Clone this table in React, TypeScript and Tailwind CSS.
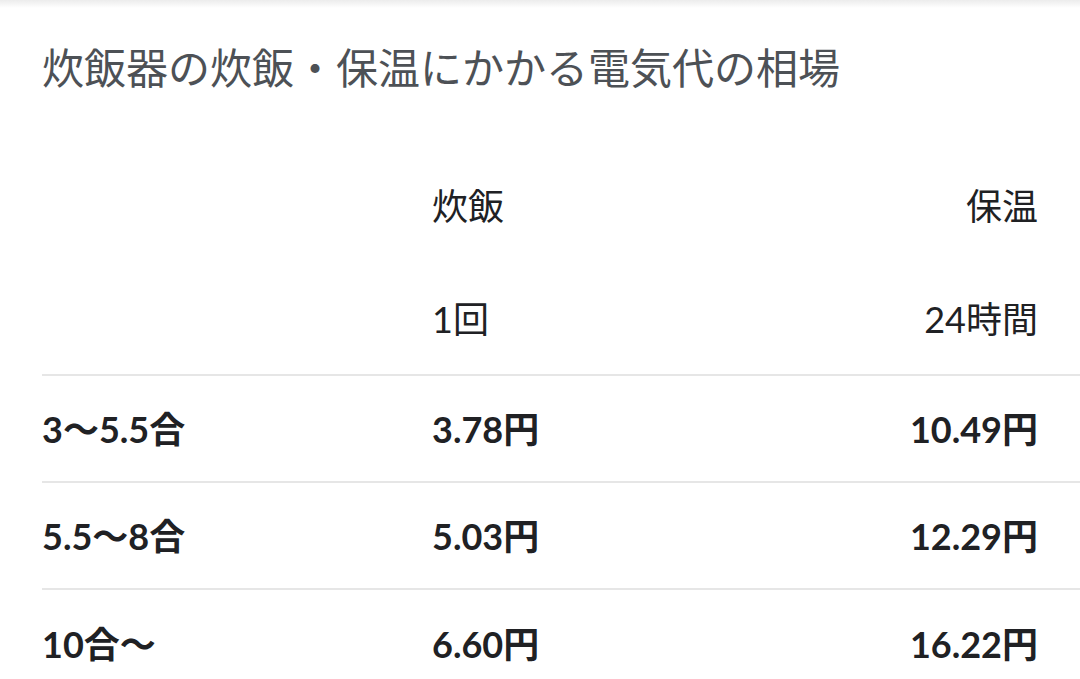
import React from "react";

const rows = [
  ["3〜5.5合", "3.78円", "10.49円"],
  ["5.5〜8合", "5.03円", "12.29円"],
  ["10合〜", "6.60円", "16.22円"],
];

export default function App() {
  return (
    <div
      className="w-[1080px] h-[679px] overflow-hidden bg-white relative"
      style={{ fontFamily: 'Lato, "Noto Sans CJK JP", sans-serif' }}
    >
      <div className="absolute top-0 left-0 right-0 h-[8px] bg-gradient-to-b from-[#ececec] to-white" />
      <div className="pl-[42px] pt-[44px] h-[148px]">
        <h1 className="text-[42px] leading-[48px] text-[#4d5156] font-normal whitespace-nowrap">
          炊飯器の炊飯・保温にかかる電気代の相場
        </h1>
      </div>
      <div className="pl-[42px]">
        <div className="flex h-[116px] items-center text-[36px] text-[#202124] pr-[42px]">
          <div className="w-[390px]" />
          <div className="flex-1">炊飯</div>
          <div className="text-right">保温</div>
        </div>
        <div className="flex h-[112px] items-center text-[36px] text-[#202124] pr-[42px] border-b-2 border-[#e6e6e6]">
          <div className="w-[390px]" />
          <div className="flex-1">1回</div>
          <div className="text-right">24時間</div>
        </div>
        {rows.map((r, i) => (
          <div
            key={i}
            className={`flex h-[107px] items-center text-[36px] font-bold text-[#202124] pr-[42px] ${
              i < rows.length - 1 ? "border-b-2 border-[#e6e6e6]" : ""
            }`}
          >
            <div className="w-[390px]">{r[0]}</div>
            <div className="flex-1">{r[1]}</div>
            <div className="text-right">{r[2]}</div>
          </div>
        ))}
      </div>
    </div>
  );
}
